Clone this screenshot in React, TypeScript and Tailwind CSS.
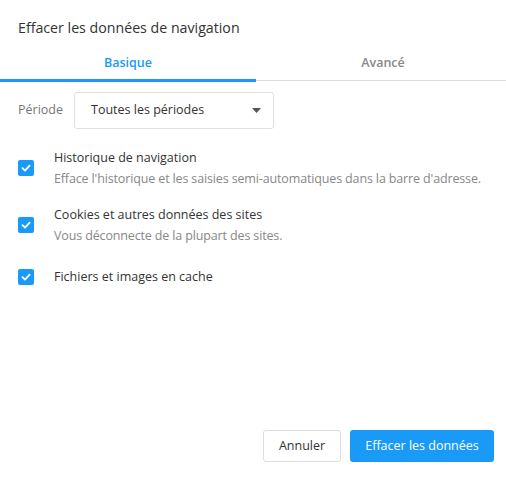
import React from "react";

const Check = () => (
  <div className="w-4 h-4 rounded-[2px] bg-[#1a9af7] flex items-center justify-center shrink-0">
    <svg width="12" height="12" viewBox="0 0 12 12" fill="none">
      <path d="M2.5 6.2 L5 8.6 L9.6 3.6" stroke="white" strokeWidth="1.8" strokeLinecap="round" strokeLinejoin="round" />
    </svg>
  </div>
);

export default function App() {
  const font = { fontFamily: '"Open Sans", "Noto Sans", sans-serif' };
  return (
    <div className="w-[506px] h-[477px] bg-white flex flex-col" style={font}>
      <div className="pl-[18px] pt-[17px] h-[47px] text-[14.2px] text-[#333]">Effacer les données de navigation</div>
      <div className="flex h-[35px]">
        <div className="w-[256px] flex items-center justify-center text-[12.5px] font-semibold text-[#1a9af7] border-b-[3px] border-[#1a9af7]">Basique</div>
        <div className="flex-1 flex flex-col">
          <div className="flex-1 flex items-center justify-center pl-[4px] text-[12.5px] font-semibold text-[#888]">Avancé</div>
          <div className="h-px bg-[#ddd] mb-[1px]"></div>
        </div>
      </div>
      <div className="flex items-center pl-[18px] mt-[10px]">
        <span className="text-[12.5px] text-[#777] w-[56px]">Période</span>
        <div className="w-[200px] h-[37px] border border-[#e0e0e0] rounded-[3px] flex items-center justify-between pl-[16px] pr-[12px]">
          <span className="text-[12.5px] text-[#333]">Toutes les périodes</span>
          <svg width="9" height="5" viewBox="0 0 9 5"><path d="M0 0 L9 0 L4.5 5 Z" fill="#555" /></svg>
        </div>
      </div>
      <div className="flex flex-col pl-[18px] mt-[18px] gap-[15px]">
        <div className="flex items-center gap-[20px]">
          <Check />
          <div className="flex flex-col">
            <span className="text-[12.5px] text-[#333] leading-[21px]">Historique de navigation</span>
            <span className="text-[12.5px] text-[#888] leading-[21px] tracking-[-0.14px]">Efface l'historique et les saisies semi-automatiques dans la barre d'adresse.</span>
          </div>
        </div>
        <div className="flex items-center gap-[20px]">
          <Check />
          <div className="flex flex-col">
            <span className="text-[12.5px] text-[#333] leading-[21px]">Cookies et autres données des sites</span>
            <span className="text-[12.5px] text-[#888] leading-[21px] tracking-[-0.14px]">Vous déconnecte de la plupart des sites.</span>
          </div>
        </div>
        <div className="flex items-center gap-[20px] pt-[5px]">
          <Check />
          <span className="text-[12.5px] text-[#333] leading-[21px]">Fichiers et images en cache</span>
        </div>
      </div>
      <div className="flex-1"></div>
      <div className="flex justify-end gap-[9px] pr-[12px] pb-[15px]">
        <button className="w-[78px] h-[32px] border border-[#ddd] rounded-[3px] text-[12.5px] text-[#333] bg-white">Annuler</button>
        <button className="w-[144px] h-[32px] rounded-[3px] text-[12.5px] text-white bg-[#1a9af7]">Effacer les données</button>
      </div>
    </div>
  );
}
